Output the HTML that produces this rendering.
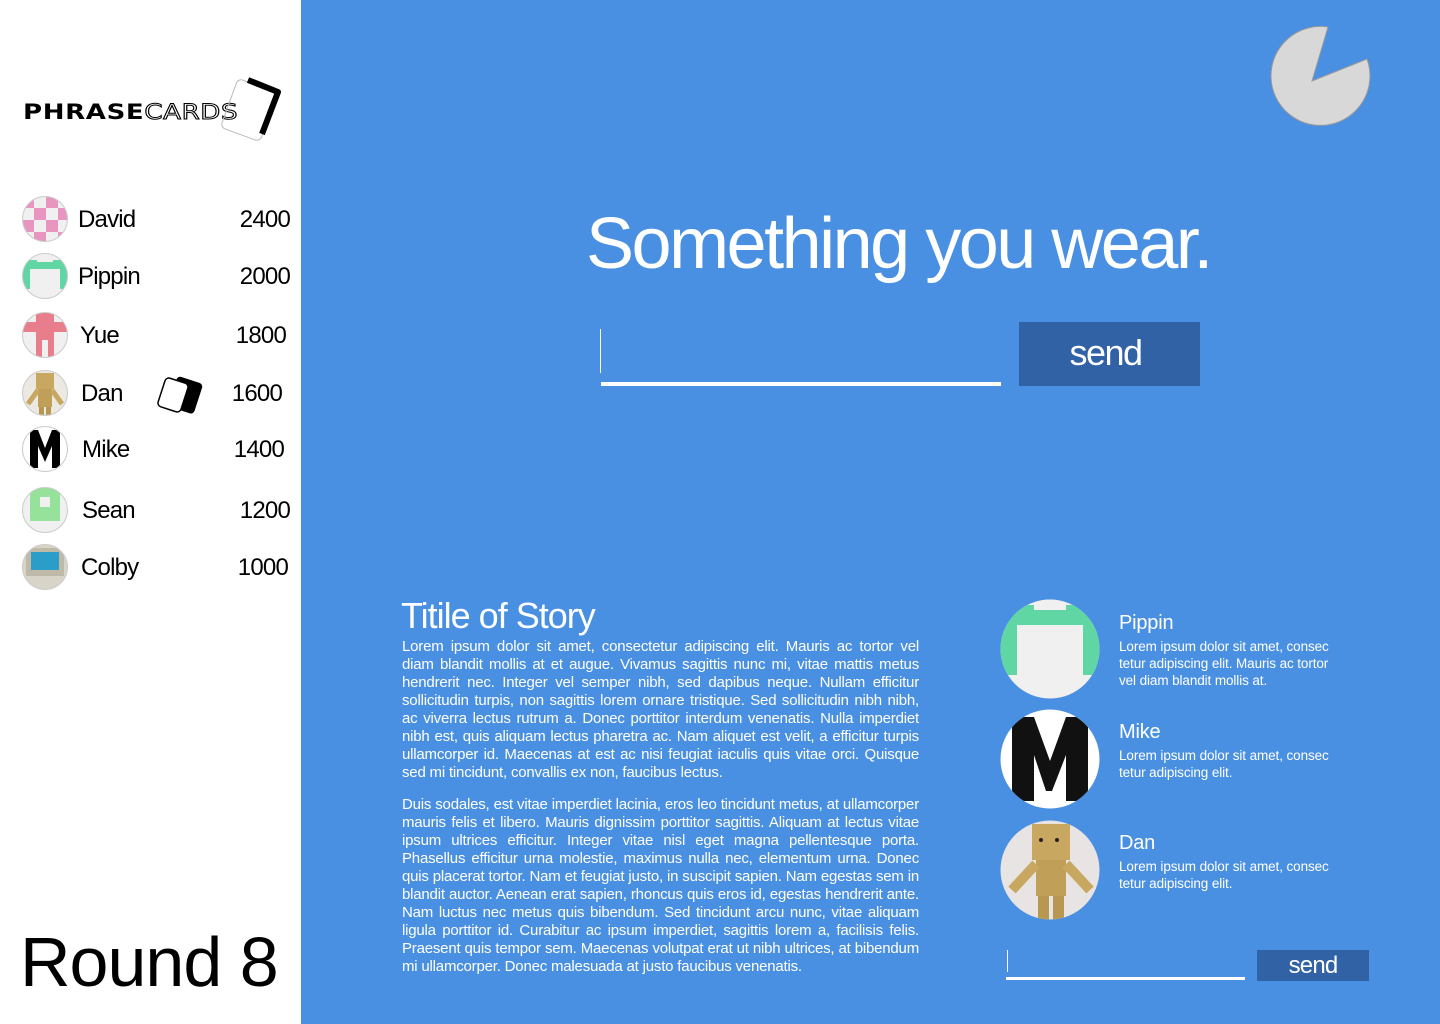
<!DOCTYPE html>
<html><head><meta charset="utf-8"><style>
*{margin:0;padding:0;box-sizing:border-box}
body{width:1440px;height:1024px;overflow:hidden;font-family:"Liberation Sans",sans-serif;background:#4a90e2;position:relative}
#side{position:absolute;left:0;top:0;width:301px;height:1024px;background:#fff}
.row{position:absolute;left:22px;width:270px;height:46px}
.row svg{position:absolute;left:0;top:0}
.row .n{position:absolute;left:56px;top:10px;font-size:24px;color:#000;letter-spacing:-0.8px}
.row .s{position:absolute;right:2px;top:10px;font-size:24px;color:#000;letter-spacing:-0.8px}
.ab{position:absolute;color:#fff}
</style></head><body>
<div id="side">
 <div style="position:absolute;left:23px;top:100px;font-size:21px;font-weight:900;letter-spacing:0.5px;color:#000;font-family:'DejaVu Sans',sans-serif;transform:scaleX(1.24);transform-origin:left;white-space:nowrap">PHRASE<span style="color:#fff;-webkit-text-stroke:1px #000;font-weight:400">CARDS</span></div>
 <svg style="position:absolute;left:210px;top:74px" width="80" height="68" viewBox="0 0 80 68"><rect x="18" y="10" width="42" height="52" rx="5" transform="rotate(20 39 36)" fill="none" stroke="#bbb" stroke-width="1"/><path d="M38 6 L68 18 L52 60" fill="none" stroke="#000" stroke-width="6" stroke-linejoin="round"/></svg>
 <div class="row" style="top:196px"><svg width="46" height="46"><defs><clipPath id="c1"><circle cx="23" cy="23" r="22.5"/></clipPath></defs><g clip-path="url(#c1)"><rect width="46" height="46" fill="#f0f0f0"/><g fill="#e895bf"><rect x="0" y="0" width="12" height="12"/><rect x="24" y="0" width="12" height="12"/><rect x="12" y="12" width="12" height="12"/><rect x="36" y="12" width="12" height="12"/><rect x="0" y="24" width="12" height="12"/><rect x="24" y="24" width="12" height="12"/><rect x="12" y="36" width="12" height="12"/><rect x="36" y="36" width="12" height="12"/></g></g><circle cx="23" cy="23" r="22.5" fill="none" stroke="#ccc"/></svg><span class="n">David</span><span class="s">2400</span></div>
 <div class="row" style="top:253px"><svg width="46" height="46"><defs><clipPath id="c2"><circle cx="23" cy="23" r="22.5"/></clipPath></defs><g clip-path="url(#c2)"><rect width="46" height="46" fill="#f0f0f0"/><g fill="#5fd6a4"><rect x="0" y="7" width="46" height="9"/><rect x="0" y="16" width="8" height="20"/><rect x="38" y="16" width="8" height="20"/></g><rect x="15" y="0" width="16" height="9" fill="#f0f0f0"/></g><circle cx="23" cy="23" r="22.5" fill="none" stroke="#ccc"/></svg><span class="n">Pippin</span><span class="s">2000</span></div>
 <div class="row" style="top:312px"><svg width="46" height="46"><defs><clipPath id="c3"><circle cx="23" cy="23" r="22.5"/></clipPath></defs><g clip-path="url(#c3)"><rect width="46" height="46" fill="#f0f0f0"/><g fill="#e87d8c"><rect x="0" y="10" width="46" height="10"/><rect x="14" y="0" width="18" height="46"/></g><rect x="20" y="28" width="6" height="18" fill="#f0f0f0"/></g><circle cx="23" cy="23" r="22.5" fill="none" stroke="#ccc"/></svg><span class="n" style="left:58px">Yue</span><span class="s" style="right:6px">1800</span></div>
 <div class="row" style="top:370px"><svg width="46" height="46"><defs><clipPath id="c4"><circle cx="23" cy="23" r="22.5"/></clipPath></defs><g clip-path="url(#c4)"><rect width="46" height="46" fill="#ece8e2"/><rect x="14" y="3" width="18" height="16" fill="#c8a860"/><rect x="16" y="19" width="14" height="18" fill="#c0a058"/><path d="M16 20 L6 34 M30 20 L40 34" stroke="#c8a860" stroke-width="5"/><rect x="17" y="37" width="5" height="9" fill="#b89850"/><rect x="24" y="37" width="5" height="9" fill="#b89850"/></g><circle cx="23" cy="23" r="22.5" fill="none" stroke="#ccc"/></svg><span class="n" style="left:59px">Dan</span><span class="s" style="right:10px">1600</span></div>
 <svg style="position:absolute;left:155px;top:376px" width="50" height="40" viewBox="0 0 50 40"><rect x="17" y="3" width="27" height="32" rx="4" transform="rotate(18 30 19)" fill="#000"/><rect x="6" y="4" width="24" height="30" rx="4" transform="rotate(18 18 19)" fill="#fff" stroke="#000" stroke-width="1.5"/></svg>
 <div class="row" style="top:426px"><svg width="46" height="46"><defs><clipPath id="c5"><circle cx="23" cy="23" r="22.5"/></clipPath></defs><g clip-path="url(#c5)"><rect width="46" height="46" fill="#fff"/><path d="M8 4 H16 L23 22 L30 4 H38 V42 H30 V20 L23 36 L16 20 V42 H8 Z" fill="#000"/></g><circle cx="23" cy="23" r="22.5" fill="none" stroke="#ccc"/></svg><span class="n" style="left:60px">Mike</span><span class="s" style="right:8px">1400</span></div>
 <div class="row" style="top:487px"><svg width="46" height="46"><defs><clipPath id="c6"><circle cx="23" cy="23" r="22.5"/></clipPath></defs><g clip-path="url(#c6)"><rect width="46" height="46" fill="#f0f0f0"/><rect x="8" y="0" width="30" height="34" fill="#96e29a"/><rect x="18" y="10" width="10" height="10" fill="#f0f0f0"/></g><circle cx="23" cy="23" r="22.5" fill="none" stroke="#ccc"/></svg><span class="n" style="left:60px">Sean</span><span class="s">1200</span></div>
 <div class="row" style="top:544px"><svg width="46" height="46"><defs><clipPath id="c7"><circle cx="23" cy="23" r="22.5"/></clipPath></defs><g clip-path="url(#c7)"><rect width="46" height="46" fill="#d8d4c8"/><rect x="4" y="4" width="38" height="28" fill="#bfb9a8"/><rect x="9" y="8" width="28" height="18" fill="#2a9ec8"/></g><circle cx="23" cy="23" r="22.5" fill="none" stroke="#ccc"/></svg><span class="n" style="left:59px">Colby</span><span class="s" style="right:4px">1000</span></div>
 <div style="position:absolute;left:20px;top:922px;font-size:70px;letter-spacing:-1px;color:#000">Round 8</div>
</div>
<svg style="position:absolute;left:1268px;top:23px" width="104" height="104" viewBox="1268 23 104 104"><path d="M1312 81 L1328 27 A49.5 49.5 0 1 0 1367 59 Z" fill="#d8d8d8" stroke="#999" stroke-width="1"/></svg>
<div class="ab" style="left:586px;top:203px;font-size:72px;letter-spacing:-2.5px;font-weight:300">Something you wear.</div>
<div style="position:absolute;left:600px;top:329px;width:1px;height:44px;background:#fff"></div>
<div style="position:absolute;left:601px;top:382px;width:400px;height:4px;background:#fff"></div>
<div style="position:absolute;left:1019px;top:322px;width:181px;height:64px;background:#3162a6;color:#fff;font-size:36px;text-align:center;line-height:62px;letter-spacing:-1.5px;text-indent:-8px">send</div>
<div class="ab" style="left:401px;top:595px;font-size:36px;letter-spacing:-1px">Titile of Story</div>
<div class="ab" style="left:402px;top:638px;width:517px;font-size:15px;line-height:18px;text-align:justify;letter-spacing:-0.2px">
<p>Lorem ipsum dolor sit amet, consectetur adipiscing elit. Mauris ac tortor vel diam blandit mollis at et augue. Vivamus sagittis nunc mi, vitae mattis metus hendrerit nec. Integer vel semper nibh, sed dapibus neque. Nullam efficitur sollicitudin turpis, non sagittis lorem ornare tristique. Sed sollicitudin nibh nibh, ac viverra lectus rutrum a. Donec porttitor interdum venenatis. Nulla imperdiet nibh est, quis aliquam lectus pharetra ac. Nam aliquet est velit, a efficitur turpis ullamcorper id. Maecenas at est ac nisi feugiat iaculis quis vitae orci. Quisque sed mi tincidunt, convallis ex non, faucibus lectus.</p>
<p style="margin-top:14px">Duis sodales, est vitae imperdiet lacinia, eros leo tincidunt metus, at ullamcorper mauris felis et libero. Mauris dignissim porttitor sagittis. Aliquam at lectus vitae ipsum ultrices efficitur. Integer vitae nisl eget magna pellentesque porta. Phasellus efficitur urna molestie, maximus nulla nec, elementum urna. Donec quis placerat tortor. Nam et feugiat justo, in suscipit sapien. Nam egestas sem in blandit auctor. Aenean erat sapien, rhoncus quis eros id, egestas hendrerit ante. Nam luctus nec metus quis bibendum. Sed tincidunt arcu nunc, vitae aliquam ligula porttitor id. Curabitur ac ipsum imperdiet, sagittis lorem a, facilisis felis. Praesent quis tempor sem. Maecenas volutpat erat ut nibh ultrices, at bibendum mi ullamcorper. Donec malesuada at justo faucibus venenatis.</p>
</div>
<svg style="position:absolute;left:1000px;top:599px" width="100" height="100"><defs><clipPath id="d1"><circle cx="50" cy="50" r="49.5"/></clipPath></defs><g clip-path="url(#d1)"><rect width="100" height="100" fill="#f0f0f0"/><g fill="#5fd6a4"><rect x="0" y="6" width="100" height="20"/><rect x="0" y="26" width="17" height="50"/><rect x="83" y="26" width="17" height="50"/></g><rect x="34" y="0" width="32" height="11" fill="#f0f0f0"/></g></svg>
<svg style="position:absolute;left:1000px;top:709px" width="100" height="100"><defs><clipPath id="d2"><circle cx="50" cy="50" r="49.5"/></clipPath></defs><g clip-path="url(#d2)"><rect width="100" height="100" fill="#fff"/><path d="M12 8 H34 L50 52 L66 8 H88 V92 H66 V46 L52 82 H46 L34 46 V92 H12 Z" fill="#111"/></g></svg>
<svg style="position:absolute;left:1000px;top:820px" width="100" height="100"><defs><clipPath id="d3"><circle cx="50" cy="50" r="49.5"/></clipPath></defs><g clip-path="url(#d3)"><rect width="100" height="100" fill="#e8e4e4"/><rect x="32" y="4" width="38" height="36" fill="#c8a860"/><circle cx="41" cy="20" r="2" fill="#222"/><circle cx="57" cy="20" r="2" fill="#222"/><rect x="36" y="40" width="30" height="36" fill="#c0a058"/><path d="M36 44 L12 70 M66 44 L90 70" stroke="#c8a860" stroke-width="10"/><rect x="38" y="76" width="11" height="24" fill="#b89850"/><rect x="53" y="76" width="11" height="24" fill="#b89850"/></g></svg>
<div class="ab" style="left:1119px;top:612px;font-size:20px;letter-spacing:-0.2px">Pippin</div>
<div class="ab" style="left:1119px;top:638px;font-size:13.5px;line-height:17px;letter-spacing:-0.1px">Lorem ipsum dolor sit amet, consec<br>tetur adipiscing elit. Mauris ac tortor<br>vel diam blandit mollis at.</div>
<div class="ab" style="left:1119px;top:721px;font-size:20px;letter-spacing:-0.2px">Mike</div>
<div class="ab" style="left:1119px;top:747px;font-size:13.5px;line-height:17px;letter-spacing:-0.1px">Lorem ipsum dolor sit amet, consec<br>tetur adipiscing elit.</div>
<div class="ab" style="left:1119px;top:832px;font-size:20px;letter-spacing:-0.2px">Dan</div>
<div class="ab" style="left:1119px;top:858px;font-size:13.5px;line-height:17px;letter-spacing:-0.1px">Lorem ipsum dolor sit amet, consec<br>tetur adipiscing elit.</div>
<div style="position:absolute;left:1007px;top:950px;width:1px;height:22px;background:#fff"></div>
<div style="position:absolute;left:1006px;top:977px;width:239px;height:3px;background:#fff"></div>
<div style="position:absolute;left:1257px;top:950px;width:112px;height:31px;background:#3162a6;color:#fff;font-size:24px;text-align:center;line-height:31px;letter-spacing:-0.8px">send</div>
</body></html>
